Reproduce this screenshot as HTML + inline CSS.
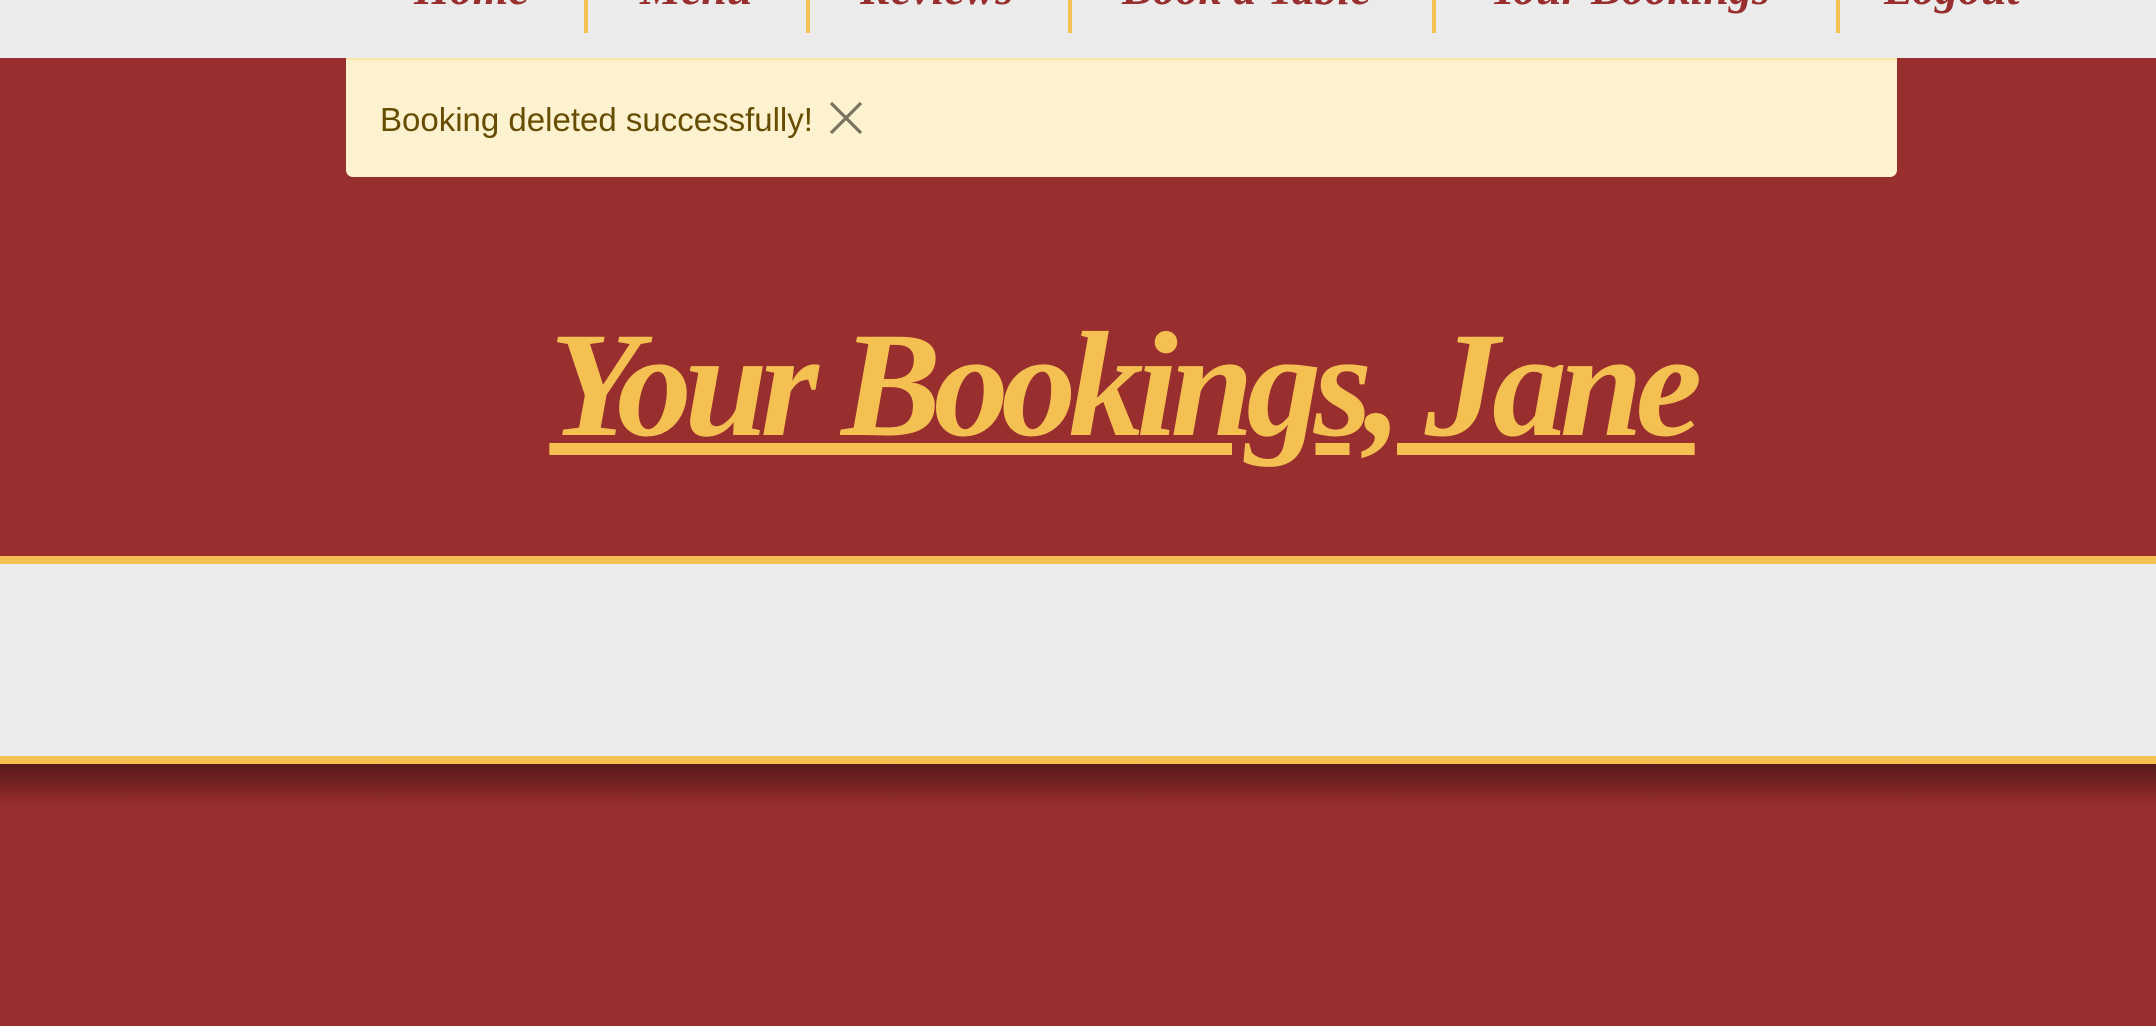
<!DOCTYPE html>
<html><head><meta charset="utf-8"><style>
html,body{margin:0;padding:0;}
body{width:2156px;height:1026px;position:relative;overflow:hidden;background:#992e2e;font-family:"Liberation Sans",sans-serif;}
.nav{position:absolute;left:0;top:0;width:2156px;height:58px;background:#ebebeb;overflow:hidden;}
.nav span{position:absolute;top:-34px;font-family:"Liberation Serif",serif;font-style:italic;font-weight:bold;font-size:46px;line-height:46px;color:#992e2e;white-space:nowrap;}
.sep{position:absolute;top:0;width:4px;height:33px;background:#f5c052;}
.alert{position:absolute;left:346px;top:58px;width:1551px;height:119px;background:#fdf2cf;border-radius:0 0 7px 7px;border-top:2px solid #fce8a6;box-sizing:border-box;}
.alert .t{position:absolute;left:34px;top:42px;font-size:33px;line-height:36px;color:#664d03;white-space:nowrap;}
.alert svg{position:absolute;left:483px;top:41px;}
h1{position:absolute;left:44px;top:300px;width:2156px;margin:0;text-align:center;font-family:"Liberation Serif",serif;font-style:italic;font-weight:bold;font-size:150px;line-height:170px;color:#f5c052;letter-spacing:-7.5px;text-decoration:underline;text-decoration-thickness:12px;text-underline-offset:8px;}
.y1{position:absolute;left:0;top:556px;width:2156px;height:8px;background:#f5c052;}
.grey{position:absolute;left:0;top:564px;width:2156px;height:192px;background:#ebebeb;}
.y2{position:absolute;left:0;top:756px;width:2156px;height:8px;background:#f5c052;}
.shadow{position:absolute;left:0;top:764px;width:2156px;height:42px;background:linear-gradient(#561819,#992e2e);}
</style></head><body>
<div class="nav">
<span style="left:414px">Home</span>
<div class="sep" style="left:584px"></div>
<span style="left:640px">Menu</span>
<div class="sep" style="left:806px"></div>
<span style="left:860px">Reviews</span>
<div class="sep" style="left:1068px"></div>
<span style="left:1122px">Book a Table</span>
<div class="sep" style="left:1432px"></div>
<span style="left:1490px">Your Bookings</span>
<div class="sep" style="left:1836px"></div>
<span style="left:1884px">Logout</span>
</div>
<div class="alert"><div class="t">Booking deleted successfully!</div>
<svg width="34" height="34" viewBox="0 0 34 34"><path d="M2 2L32 32M32 2L2 32" stroke="#7a7260" stroke-width="3.2" fill="none"/></svg></div>
<h1>Your Bookings, Jane</h1>
<div class="y1"></div><div class="grey"></div><div class="y2"></div><div class="shadow"></div>
</body></html>
